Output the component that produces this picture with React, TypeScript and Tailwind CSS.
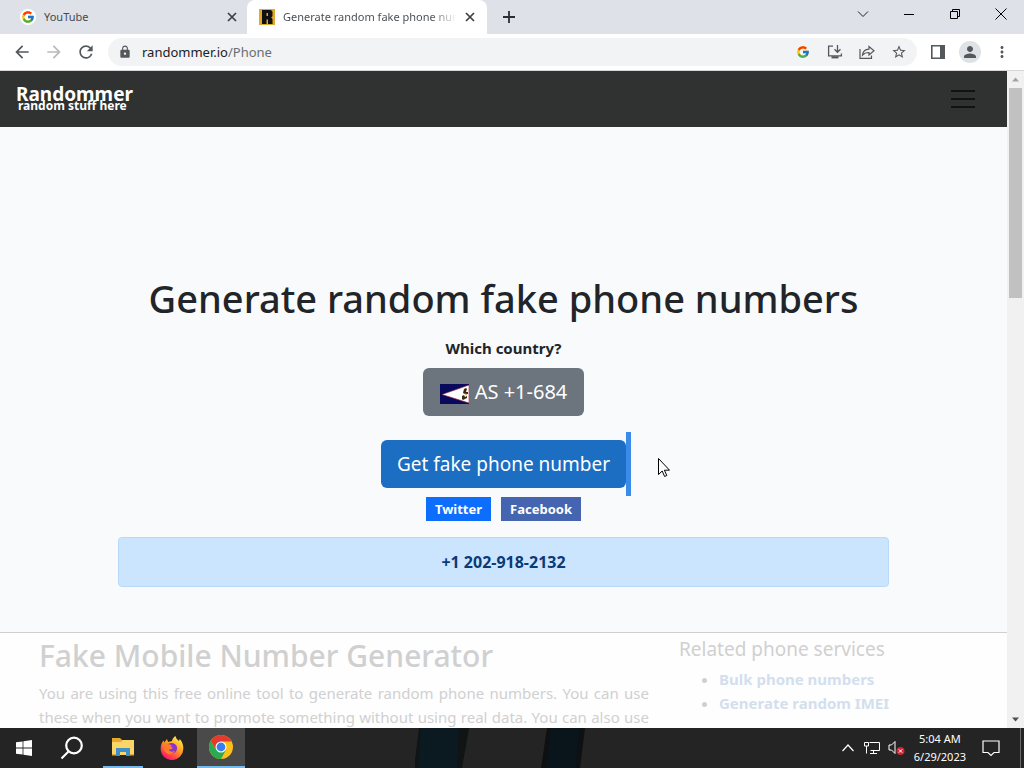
import React from "react"
import {
  MdArrowBack,
  MdArrowForward,
  MdRefresh,
  MdLock,
  MdStarOutline,
  MdPerson,
  MdMoreVert,
} from "react-icons/md"
import { FcGoogle } from "react-icons/fc"

const relatedServices = ["Bulk phone numbers", "Generate random IMEI"]

const TabClose = () => (
  <svg viewBox="0 0 10 10" className="size-2.5" stroke="#3c4043" strokeWidth="1.7">
    <path d="M1 1l8 8M9 1l-8 8" />
  </svg>
)

const TabStrip = () => (
  <div className="flex h-[34px] shrink-0 bg-[#dee1e8] text-[11px] text-[#45494d]">
    <div className="flex w-[247px] items-center pr-2.5 pl-5">
      <span className="flex size-4 items-center justify-center rounded-full bg-white">
        <FcGoogle className="size-3.5" />
      </span>
      <span className="ml-2 flex-1">YouTube</span>
      <button type="button" aria-label="Close YouTube">
        <TabClose />
      </button>
    </div>
    <div className="flex w-60 items-center rounded-t-lg bg-white pr-3 pl-3">
      <svg viewBox="0 0 16 16" className="size-4 shrink-0">
        <rect width="16" height="16" fill="#e0ab2c" />
        <path
          fillRule="evenodd"
          fill="#111"
          d="M3 1h8a2.500 2.500 0 0 1 2.500 2.500v3a2 2 0 0 1-1.500 2 2 2 0 0 1 1.500 2V15H9v-4.500H7.500V15H3zM7.500 4v3H9V4z"
        />
      </svg>
      <span className="ml-2 flex-1 overflow-hidden bg-linear-to-r from-[#45494d] from-85% to-transparent bg-clip-text whitespace-nowrap text-transparent">
        Generate random fake phone numbers
      </span>
      <button type="button" aria-label="Close tab" className="ml-2">
        <TabClose />
      </button>
    </div>
    <button type="button" aria-label="New tab" className="ml-4">
      <svg viewBox="0 0 12 12" className="size-3" stroke="#2b2e31" strokeWidth="1.8">
        <path d="M6 0v12M0 6h12" />
      </svg>
    </button>
    <div className="ml-auto flex h-7 items-center">
      <button type="button" aria-label="Search tabs" className="flex w-[46px] justify-center">
        <svg viewBox="0 0 12 12" className="size-3" fill="none" stroke="#222">
          <path d="M1 3.500l5 5 5-5" />
        </svg>
      </button>
      <button type="button" aria-label="Minimize" className="flex w-[46px] justify-center">
        <svg viewBox="0 0 10 10" className="size-2.5" stroke="#000">
          <path d="M0 5.500h10" />
        </svg>
      </button>
      <button type="button" aria-label="Restore" className="flex w-[46px] justify-center">
        <svg viewBox="0 0 10 10" className="size-2.5" fill="none" stroke="#000">
          <path d="M.5 2.500h7v7h-7zM2.500 2.500v-2h7v7h-2" />
        </svg>
      </button>
      <button type="button" aria-label="Close" className="flex w-[46px] justify-center">
        <svg viewBox="0 0 12 12" className="size-3" stroke="#000">
          <path d="M.5.5l11 11M11.500.5l-11 11" />
        </svg>
      </button>
    </div>
  </div>
)

const Toolbar = () => (
  <div className="flex h-[37px] shrink-0 items-center border-b border-[#d5d7da] bg-white pr-[13px] pl-3 text-[#54585c]">
    <button type="button" aria-label="Back" className="mr-3">
      <MdArrowBack className="size-5" />
    </button>
    <button type="button" aria-label="Forward" className="mr-3 text-[#b8babd]">
      <MdArrowForward className="size-5" />
    </button>
    <button type="button" aria-label="Reload">
      <MdRefresh className="size-5" />
    </button>
    <div className="ml-3 flex h-7 flex-1 items-center rounded-full bg-[#f1f3f4] pr-2.5 pl-2.5">
      <MdLock className="size-3.5" />
      <span className="ml-2.5 flex-1 pt-px text-[13px] text-[#6a6e72]">
        <span className="text-[#202124]">randommer.io</span>/Phone
      </span>
      <div className="flex items-center gap-4">
        <FcGoogle className="mr-px size-3.5" />
        <button type="button" aria-label="Install">
          <svg viewBox="0 0 16 16" className="size-4" fill="none" stroke="currentColor" strokeWidth="1.300">
            <path d="M6 2.200H1.600v9.600h12.800V9.500M10.500 1v7M7.500 5.300l3 3 3-3" />
            <path d="M4.500 13.300h7" strokeWidth="2.200" />
          </svg>
        </button>
        <button type="button" aria-label="Share">
          <svg viewBox="0 0 16 16" className="size-4" fill="none" stroke="currentColor" strokeWidth="1.200">
            <path d="M1 5v9.300h11.500V11.500" />
            <path d="M3.500 11c.4-3.800 2.700-5.600 6.500-5.800V2.500L15 6.800l-5 4.200V8.500c-2.800 0-4.800.6-6.500 2.500z" />
          </svg>
        </button>
        <button type="button" aria-label="Bookmark">
          <MdStarOutline className="size-4" />
        </button>
      </div>
    </div>
    <button type="button" aria-label="Side panel" className="ml-3.5">
      <svg viewBox="0 0 14 14" className="size-3.5">
        <path fill="none" stroke="currentColor" strokeWidth="1.600" d="M.8.8h12.400v12.400H.8z" />
        <path fill="currentColor" d="M9 0h5v14H9z" />
      </svg>
    </button>
    <button
      type="button"
      aria-label="Profile"
      className="ml-3.5 flex size-[22px] items-center justify-center rounded-full bg-[#dee1e6]"
    >
      <MdPerson className="size-4.5" />
    </button>
    <button type="button" aria-label="Menu" className="ml-3">
      <MdMoreVert className="size-[18px]" />
    </button>
  </div>
)

const Navbar = () => (
  <nav className="flex h-14 items-center justify-between bg-[#303231] pr-8 pl-4">
    <a href="#" className="pt-0.5 font-bold text-white">
      <span className="block text-[19px] leading-3">Randommer</span>
      <span className="ml-0.5 block text-xs leading-3">random stuff here</span>
    </a>
    <button type="button" aria-label="Toggle navigation">
      <svg viewBox="0 0 24 20" className="h-5 w-6" stroke="#111312" strokeWidth="2">
        <path d="M0 2h24M0 10h24M0 18h24" />
      </svg>
    </button>
  </nav>
)

const Flag = () => (
  <svg viewBox="0 0 29 20" className="h-5 w-[29px]">
    <rect width="29" height="20" fill="#0a0a5c" />
    <path d="M2 10.500L29 1v18z" fill="#fff" stroke="#9b2335" strokeWidth=".6" />
    <path
      d="M24 5l2-1 1 1-1 3h2v2h-3l-2-1zM22 12l2-1 1 2 2-1v2l-2 1-2 1-1-1z"
      fill="#3a2a12"
    />
    <path d="M25 9l2 1-1 2z" fill="#b88a2e" />
  </svg>
)

const Hero = () => (
  <section className="flex flex-col items-center border-b border-[#ced0d2] bg-[#f8fafc] px-[118px] pt-[147px] pb-[45px] text-[#212529]">
    <h1 className="text-[38px] leading-12 font-medium whitespace-nowrap">
      Generate random fake phone numbers
    </h1>
    <p className="mt-3.5 text-[15px] leading-6 font-bold">Which country?</p>
    <button
      type="button"
      className="mt-2 flex h-12 items-center rounded-md bg-[#6c757d] px-[17px] text-xl text-white"
    >
      <span className="mt-1 mr-1.5">
        <Flag />
      </span>
      AS +1-684
    </button>
    <div className="relative mt-6">
      <button
        type="button"
        className="h-12 rounded-md bg-[#1b6ec2] px-4 text-[19px] whitespace-nowrap text-white"
      >
        Get fake phone number
      </button>
      <span className="absolute -top-2 left-full h-16 w-[5px] bg-[#3b8bea]" />
    </div>
    <div className="mt-[9px] flex gap-2.5 text-[13px] leading-6 font-bold text-white">
      <a href="#" className="bg-[#0d6efd] px-[9px]">
        Twitter
      </a>
      <a href="#" className="bg-[#4565b0] px-[9px]">
        Facebook
      </a>
    </div>
    <div
      role="alert"
      className="mt-4 w-full rounded border border-[#b8daf8] bg-[#cce5ff] py-3 text-center text-base leading-6 font-bold text-[#0a3a78]"
    >
      +1 202-918-2132
    </div>
  </section>
)

const About = () => (
  <section className="flex bg-[#fefefe] pl-[39px] text-[#d0d0d0]">
    <div className="w-[610px] shrink-0 pt-1">
      <h2 className="text-[30px] leading-[38px] font-medium whitespace-nowrap">Fake Mobile Number Generator</h2>
      <p className="mt-1.5 text-justify text-[15px] leading-6 [text-align-last:justify]">
        You are using this free online tool to generate random phone numbers. You can use these when you want to
        promote something without using real data. You can also use
      </p>
    </div>
    <aside className="ml-[30px] pt-1">
      <h3 className="text-[19px] leading-6 whitespace-nowrap">Related phone services</h3>
      <ul className="mt-1.5 list-disc pl-10 text-[15px] leading-6 font-bold">
        {relatedServices.map((service) => (
          <li key={service}>
            <a href="#" className="whitespace-nowrap text-[#d3dfed]">
              {service}
            </a>
          </li>
        ))}
      </ul>
    </aside>
  </section>
)

const Scrollbar = () => (
  <div className="flex w-[17px] shrink-0 flex-col items-center bg-[#f1f1f1]">
    <svg viewBox="0 0 17 17" className="size-[17px] shrink-0">
      <path d="M5 10.500l3.500-4 3.500 4z" fill="#a3a3a3" />
    </svg>
    <div className="h-[32%] w-[13px] bg-[#c1c1c1]" />
    <svg viewBox="0 0 17 17" className="mt-auto size-[17px] shrink-0">
      <path d="M5 6.500l3.500 4 3.500-4z" fill="#505050" />
    </svg>
  </div>
)

const Taskbar = () => (
  <footer className="flex h-10 shrink-0 items-center bg-[#242424] text-white">
    <button type="button" aria-label="Start" className="flex w-12 justify-center">
      <svg viewBox="0 0 16 16" className="size-4" fill="#fff">
        <path d="M0 2.300l6.600-.9v6.200H0zM7.400 1.300L16 0v7.600H7.400zM0 8.400h6.600v6.200L0 13.700zM7.400 8.400H16V16l-8.600-1.200z" />
      </svg>
    </button>
    <button type="button" aria-label="Search" className="flex w-12 justify-center">
      <svg viewBox="0 0 24 24" className="size-6" fill="none" stroke="#fff" strokeWidth="2.200">
        <circle cx="14" cy="9.500" r="7.800" />
        <path d="M8.500 15.500L1.500 22.500" />
      </svg>
    </button>
    <button
      type="button"
      aria-label="File Explorer"
      className="ml-[7px] flex h-10 w-10 items-center justify-center border-b-2 border-[#76b9ed]"
    >
      <svg viewBox="0 0 22 20" className="h-5 w-[22px]">
        <path d="M0 1h8l2 2h12v15H0z" fill="#e8a92f" />
        <path d="M0 5h9l2-2h11v15H0z" fill="#fbd567" />
        <path d="M4 11h14v8h-4v-4H8v4H4z" fill="#3f8fc8" />
        <path d="M0 17h4v1.500H0zM18 17h4v1.500h-4z" fill="#e8a92f" />
      </svg>
    </button>
    <button type="button" aria-label="Firefox" className="flex w-[54px] justify-center pl-1">
      <svg viewBox="0 0 24 24" className="size-6">
        <defs>
          <linearGradient id="fox" x1=".8" y1="0" x2=".2" y2="1">
            <stop offset="0" stopColor="#fff04a" />
            <stop offset=".45" stopColor="#ff9a22" />
            <stop offset=".8" stopColor="#ff3750" />
            <stop offset="1" stopColor="#e31587" />
          </linearGradient>
        </defs>
        <path
          d="M15.500 0c.5 2.500 2 3.500 3.500 5l.8-2c2.500 3 3.700 6 3.500 9.500A11.300 11.300 0 0 1 .7 13C.6 9 2 6.500 3.500 4.500L4.300 6.500 7 3l1 3 4-1c.3-2 1.500-4 3.500-5z"
          fill="url(#fox)"
        />
        <path d="M8 8c3-2 8-1 9 3 .5 4-2 6.500-5 6.500S7 15 7.500 13l3 .500L13 12l-3-1.500z" fill="#8a35c9" />
        <path d="M3 8c1.500-1.500 4-1 5.500 0l3.500 1.500-2 2-1 2.500c1.500 2 4 2.200 6 .5-1 3-4 4.500-7 3.500C4.500 16.500 2.500 12 3 8z" fill="#ff7a2a" />
      </svg>
    </button>
    <button
      type="button"
      aria-label="Chrome"
      className="flex h-10 w-12 items-center justify-center border-b-2 border-[#76b9ed] bg-[#4a4a4a]"
    >
      <svg viewBox="0 0 24 24" className="size-6">
        <circle cx="12" cy="12" r="12" fill="#fbc116" />
        <path d="M12 6.500h10.700L22.400 6A12 12 0 0 0 1.600 6l5.600 9z" fill="#e33b2e" />
        <path d="M1.600 6A12 12 0 0 0 12 24l5-9.200L7.200 15z" fill="#2da94f" />
        <circle cx="12" cy="12" r="5.500" fill="#fff" />
        <circle cx="12" cy="12" r="4.400" fill="#3b7ded" />
      </svg>
    </button>
    {/* wallpaper showing through the bar */}
    <svg viewBox="0 0 180 40" className="ml-[170px] h-10 w-[180px]">
      <path d="M4 0h50l-7 40H-1z" fill="#111414" />
      <path d="M6 0h38l-2 40H3z" fill="#0b1a20" />
      <path d="M132 0h38l-5 40h-39z" fill="#0e1011" />
      <path d="M136 0h28l-3 40h-30z" fill="#09151b" />
    </svg>
    <div className="ml-auto flex items-center">
      <button type="button" aria-label="Show hidden icons">
        <svg viewBox="0 0 12 12" className="size-3" fill="none" stroke="#fff" strokeWidth="1.200">
          <path d="M.5 9L6 3l5.500 6" />
        </svg>
      </button>
      <svg viewBox="0 0 16 16" className="ml-2.5 size-4" fill="none" stroke="#fff">
        <path d="M5.500 2.500h10v8h-9M.5 2.500h4v3.500h-4zM2.500 6v7.500M6 13.500h7M9.500 10.500v3" />
      </svg>
      <svg viewBox="0 0 18 18" className="ml-2 size-[18px]">
        <path d="M1 6h2.500L7 2.500v12L3.500 11H1z" fill="none" stroke="#fff" />
        <circle cx="12.500" cy="12" r="4" fill="#cf2638" />
        <path d="M10.800 10.300l3.400 3.400M14.200 10.300l-3.400 3.400" stroke="#fff" />
      </svg>
      <div className="ml-2 text-center text-[11px] leading-[18px] whitespace-nowrap">
        <div>5:04 AM</div>
        <div>6/29/2023</div>
      </div>
      <button type="button" aria-label="Notifications" className="ml-4">
        <svg viewBox="0 0 18 18" className="size-[18px]" fill="none" stroke="#fff" strokeWidth="1.200">
          <path d="M1 2h16v11.500h-5l-3 3-3-3H1z" />
        </svg>
      </button>
      <div className="ml-5 h-10 w-1 border-l border-[#6a6a6a]" />
    </div>
  </footer>
)

const App = () => (
  <div className="relative flex h-screen flex-col overflow-hidden font-['Noto_Sans','Open_Sans',sans-serif]">
    <TabStrip />
    <Toolbar />
    <div className="flex min-h-0 flex-1">
      <main className="min-w-0 flex-1 overflow-hidden bg-[#fefefe]">
        <Navbar />
        <Hero />
        <About />
      </main>
      <Scrollbar />
    </div>
    <Taskbar />
    <svg viewBox="0 0 12 19" className="absolute top-[458px] left-[658px] h-[19px] w-3">
      <path d="M.5.5v16l3.700-3.500 2.400 5.500 2.200-1-2.400-5.300h5.100z" fill="#fff" stroke="#000" />
    </svg>
  </div>
)

export default App
